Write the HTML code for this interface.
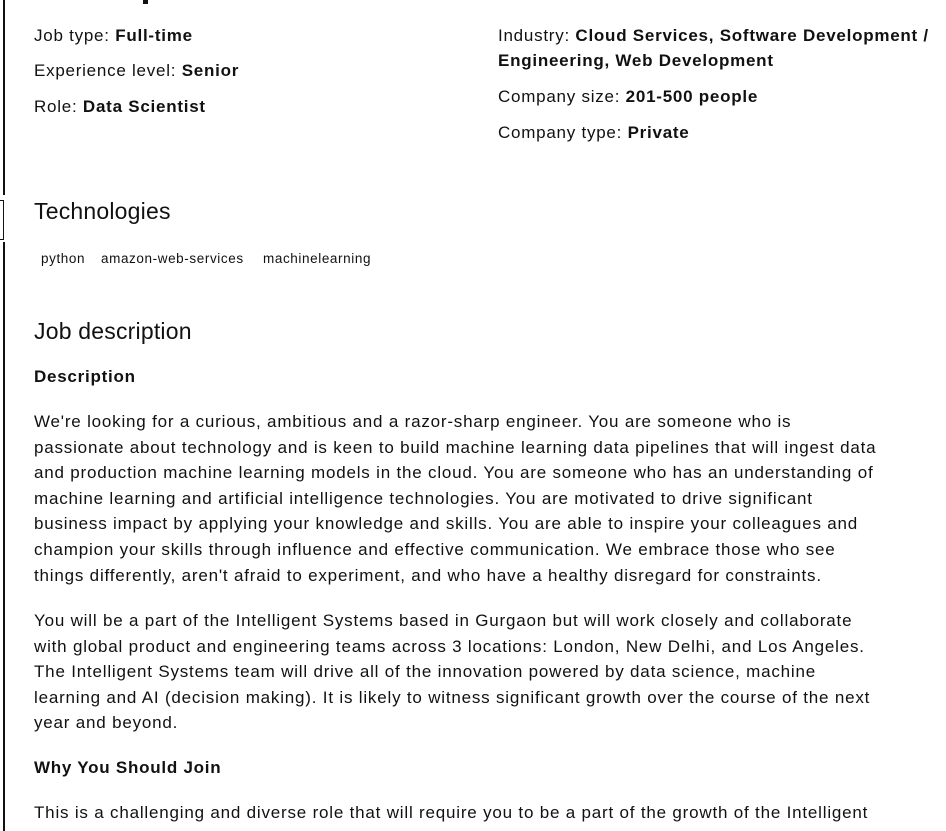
<!DOCTYPE html>
<html><head><meta charset="utf-8"><style>
body{margin:0;background:#fff;width:946px;height:831px;overflow:hidden;font-family:"Liberation Sans",sans-serif;color:#111;position:relative}
.l{position:absolute;left:3px;width:2px;background:#111}
.t{position:absolute;font-size:17px;white-space:nowrap;letter-spacing:0.75px}
b{font-weight:bold}
h2{position:absolute;margin:0;font-weight:normal;font-size:23px;left:34px;letter-spacing:0.2px}
.tag{position:absolute;top:251px;font-size:13.5px;letter-spacing:0.6px}
.p{position:absolute;left:34px;font-size:17px;line-height:25.6px;margin:0;white-space:nowrap;letter-spacing:0.8px}
</style></head><body>
<div class="l" style="top:0;height:195px"></div>
<div style="position:absolute;left:0;top:200px;width:3px;height:38px;border:1.5px solid #111;border-left:none"></div>
<div class="l" style="top:242px;height:589px"></div>
<div style="position:absolute;left:143px;top:0;width:5px;height:4px;background:#111"></div>
<div class="t" style="left:34px;top:26px">Job type: <b>Full-time</b></div>
<div class="t" style="left:34px;top:61px">Experience level: <b>Senior</b></div>
<div class="t" style="left:34px;top:97px">Role: <b>Data Scientist</b></div>
<div class="t" style="left:498px;top:26px">Industry: <b>Cloud Services, Software Development /</b></div>
<div class="t" style="left:498px;top:51px"><b>Engineering, Web Development</b></div>
<div class="t" style="left:498px;top:87px">Company size: <b>201-500 people</b></div>
<div class="t" style="left:498px;top:123px">Company type: <b>Private</b></div>
<h2 style="top:198px">Technologies</h2>
<div class="tag" style="left:41px">python</div>
<div class="tag" style="left:101px">amazon-web-services</div>
<div class="tag" style="left:263px">machinelearning</div>
<h2 style="top:318px">Job description</h2>
<div class="t" style="left:34px;top:367px"><b>Description</b></div>
<p class="p" style="top:409px">We're looking for a curious, ambitious and a razor-sharp engineer. You are someone who is<br>passionate about technology and is keen to build machine learning data pipelines that will ingest data<br>and production machine learning models in the cloud. You are someone who has an understanding of<br>machine learning and artificial intelligence technologies. You are motivated to drive significant<br>business impact by applying your knowledge and skills. You are able to inspire your colleagues and<br>champion your skills through influence and effective communication. We embrace those who see<br>things differently, aren't afraid to experiment, and who have a healthy disregard for constraints.</p>
<p class="p" style="top:608px">You will be a part of the Intelligent Systems based in Gurgaon but will work closely and collaborate<br>with global product and engineering teams across 3 locations: London, New Delhi, and Los Angeles.<br>The Intelligent Systems team will drive all of the innovation powered by data science, machine<br>learning and AI (decision making). It is likely to witness significant growth over the course of the next<br>year and beyond.</p>
<div class="t" style="left:34px;top:758px"><b>Why You Should Join</b></div>
<p class="p" style="top:800px">This is a challenging and diverse role that will require you to be a part of the growth of the Intelligent</p>
</body></html>
